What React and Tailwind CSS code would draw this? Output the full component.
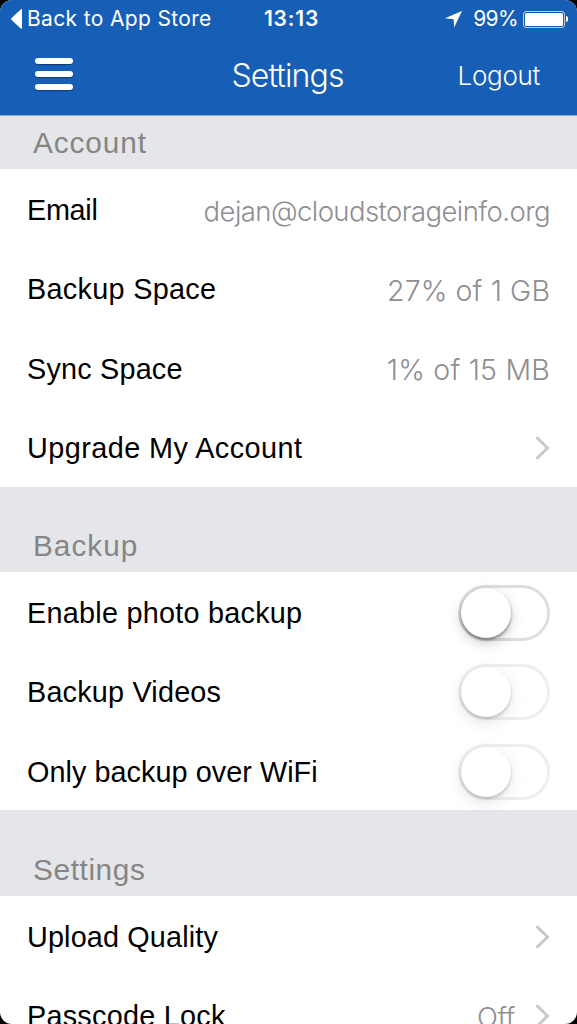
import clsx from 'clsx';

const accountRows = [
  { label: 'Email', labelSpacing: 'tracking-[-0.3px]', value: 'dejan@cloudstorageinfo.org', spacing: 'text-[27.500px] tracking-[-0.58px]' },
  { label: 'Backup Space', labelSpacing: 'tracking-[0.3px]', value: '27% of 1 GB', spacing: 'text-[28.500px] tracking-[0.1px]' },
  { label: 'Sync Space', labelSpacing: 'tracking-[0.2px]', value: '1% of 15 MB', spacing: 'text-[28.500px] tracking-[0.2px]' },
  { label: 'Upgrade My Account', labelSpacing: 'tracking-[0.45px]', link: true },
];

const backupRows = [
  { label: 'Enable photo backup', labelSpacing: 'tracking-[0.25px]', toggle: true },
  { label: 'Backup Videos', labelSpacing: 'tracking-[0.2px]', toggle: true, disabled: true },
  { label: 'Only backup over WiFi', labelSpacing: 'tracking-[0.05px]', toggle: true, disabled: true },
];

const settingsRows = [
  { label: 'Upload Quality', labelSpacing: 'tracking-[0.15px]', link: true },
  { label: 'Passcode Lock', labelSpacing: 'tracking-[0.25px]', value: 'Off', spacing: 'text-[27.500px] tracking-[-0.3px]', link: true },
];

function StatusBar() {
  return (
    <div className="grid h-9 grid-cols-[1fr_auto_1fr] items-center text-[22px] leading-9">
      <div className="flex items-center pl-[11px]">
        <svg className="mr-[5px] h-[20px] w-[11px] shrink-0" viewBox="0 0 11 20" fill="currentColor">
          <path d="M11 0v20L9.5 19.2Q2 12.5.6 11q-.9-1 0-2Q2 7.500 9.500.8Z" />
        </svg>
        <span className="font-['Inter'] text-[21px] tracking-[0.35px] whitespace-nowrap">Back to App Store</span>
      </div>
      <span className="pl-[6px] font-['Inter'] text-[21px] font-semibold tracking-[0.8px]">13:13</span>
      <div className="flex items-center justify-end pt-px pr-[9px]">
        <svg className="mr-[11px] size-[17px]" viewBox="0 0 17 17" fill="currentColor">
          <path d="M17 0 9.200 16.500 8.600 8.300 0 7.200Z" />
        </svg>
        <span className="font-['Inter'] text-[21px] tracking-[-0.6px]">99%</span>
        <div className="ml-[5px] h-[17px] w-[42px] rounded-[3px] border border-white/70 p-px">
          <div className="h-full rounded-[1.500px] bg-white"></div>
        </div>
        <div className="ml-px h-[6px] w-[2px] rounded-r-full bg-white"></div>
      </div>
    </div>
  );
}

function NavBar() {
  return (
    <div className="grid h-[79px] grid-cols-[1fr_auto_1fr] items-center pr-[37px] pl-[35px]">
      <button className="-mt-1 flex w-[38px] flex-col gap-[7px]" aria-label="Menu">
        <span className="h-[6px] rounded-full bg-white shadow-[0_1px_1px_rgba(0,0,0,0.35)]"></span>
        <span className="h-[6px] rounded-full bg-white shadow-[0_1px_1px_rgba(0,0,0,0.35)]"></span>
        <span className="h-[6px] rounded-full bg-white shadow-[0_1px_1px_rgba(0,0,0,0.35)]"></span>
      </button>
      <h1 className="pt-px font-['Inter'] text-[32px] font-light tracking-[-0.9px]">Settings</h1>
      <button className="text-right font-['Inter'] text-[26px] font-light tracking-[-0.3px]">Logout</button>
    </div>
  );
}

function Chevron() {
  return (
    <svg className="h-6 w-[15px]" viewBox="0 0 15 24" fill="none" stroke="#c7c7cc" strokeWidth="3">
      <path d="M1.500 1.200 12.500 12 1.500 22.800" />
    </svg>
  );
}

function Toggle({ disabled }) {
  return (
    <div
      role="switch"
      aria-checked="false"
      className={clsx('h-[56px] w-[92px] rounded-full border-[3px] border-[#dedede] bg-white', disabled && 'opacity-50')}
    >
      <div className="size-[50px] rounded-full bg-white shadow-[0_2px_3px_rgba(0,0,0,0.4),0_5px_14px_rgba(0,0,0,0.2)]"></div>
    </div>
  );
}

function Row({ label, labelSpacing, value, spacing, link, toggle, disabled }) {
  return (
    <div className="flex h-[79.400px] items-center justify-between px-[27px] pt-[2px]">
      <span className={clsx('pt-[1.500px] text-[28.800px] text-black', labelSpacing)}>{label}</span>
      <div className="flex items-center">
        {value && <span className={clsx("pt-[4px] font-['Inter'] font-light text-[#8e8e93]", spacing)}>{value}</span>}
        {link && <div className={clsx(value && 'ml-5')}><Chevron /></div>}
        {toggle && <Toggle disabled={disabled} />}
      </div>
    </div>
  );
}

function Section({ title, spacing, rows, first }) {
  return (
    <section>
      <h2
        className={clsx(
          'flex items-end bg-[#e5e6ea] pb-[9px] pl-[33px] text-[29.800px] leading-[34px] text-[#858585]',
          first ? 'h-[53.200px]' : 'h-[85.500px]',
          spacing
        )}
      >
        {title}
      </h2>
      {rows.map((row) => (
        <Row key={row.label} {...row} />
      ))}
    </section>
  );
}

function App() {
  return (
    <div className="h-[1024px] w-[577px] overflow-hidden bg-black font-['Liberation_Sans',sans-serif]">
      <div className="h-full overflow-hidden rounded-[12px] bg-white">
        <header className="h-[116px] border-b border-[#8fa5cb] bg-[#175eb6] text-white">
          <StatusBar />
          <NavBar />
        </header>
        <Section title="Account" spacing="tracking-[0.9px]" rows={accountRows} first />
        <Section title="Backup" spacing="tracking-[1px]" rows={backupRows} />
        <Section title="Settings" spacing="tracking-[0.6px]" rows={settingsRows} />
      </div>
    </div>
  );
}

export default App;
